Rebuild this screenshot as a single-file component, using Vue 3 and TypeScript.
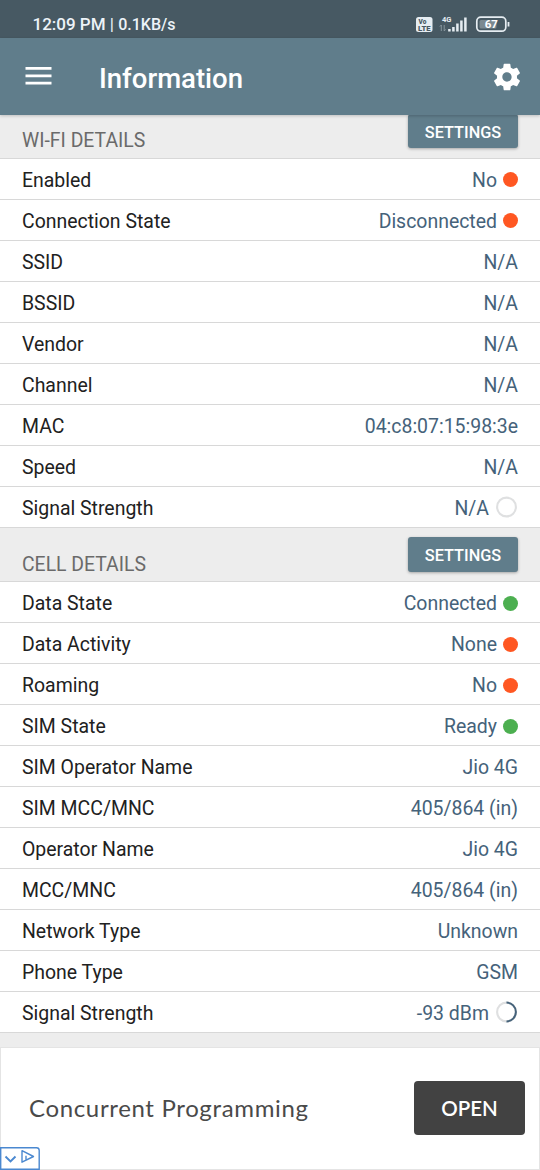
<script setup lang="ts">
type Indicator = 'red' | 'green' | 'ring' | 'progress'

interface Row {
  label: string
  value: string
  mark?: Indicator
}

interface Section {
  title: string
  rows: Row[]
}

const sections: Section[] = [
  {
    title: 'WI-FI DETAILS',
    rows: [
      { label: 'Enabled', value: 'No', mark: 'red' },
      { label: 'Connection State', value: 'Disconnected', mark: 'red' },
      { label: 'SSID', value: 'N/A' },
      { label: 'BSSID', value: 'N/A' },
      { label: 'Vendor', value: 'N/A' },
      { label: 'Channel', value: 'N/A' },
      { label: 'MAC', value: '04:c8:07:15:98:3e' },
      { label: 'Speed', value: 'N/A' },
      { label: 'Signal Strength', value: 'N/A', mark: 'ring' },
    ],
  },
  {
    title: 'CELL DETAILS',
    rows: [
      { label: 'Data State', value: 'Connected', mark: 'green' },
      { label: 'Data Activity', value: 'None', mark: 'red' },
      { label: 'Roaming', value: 'No', mark: 'red' },
      { label: 'SIM State', value: 'Ready', mark: 'green' },
      { label: 'SIM Operator Name', value: 'Jio 4G' },
      { label: 'SIM MCC/MNC', value: '405/864 (in)' },
      { label: 'Operator Name', value: 'Jio 4G' },
      { label: 'MCC/MNC', value: '405/864 (in)' },
      { label: 'Network Type', value: 'Unknown' },
      { label: 'Phone Type', value: 'GSM' },
      { label: 'Signal Strength', value: '-93 dBm', mark: 'progress' },
    ],
  },
]
</script>

<template>
  <div class="screen">
    <div class="status">
      <span class="clock">12:09 PM <i class="bar">|</i> <span class="speed">0.1KB/s</span></span>
      <svg class="status-icons" width="98" height="20" viewBox="0 0 98 20">
        <rect x="2" y="3" width="16.5" height="15" rx="2.5" fill="#e6edf2" />
        <text x="4.500" y="9.600" class="volte">Vo</text>
        <text x="4" y="16.800" class="volte" textLength="12.500" lengthAdjust="spacingAndGlyphs">LTE</text>
        <text x="28" y="8" class="net">4G</text>
        <path d="M27.300 17v-6M25.900 12.600l1.400-1.600M30.200 11v6M31.600 15.400l-1.400 1.600" stroke="#8c9ba4" stroke-width=".9" fill="none" />
        <path d="M34 17.500v-2.500M38 17.500v-4.500M42 17.500v-8M46 17.500v-11M50 17.500v-14" transform="translate(1.400 0)" stroke="#e6edf2" stroke-width="2.500" fill="none" />
        <rect x="62.800" y="3.200" width="29" height="14" rx="4" fill="none" stroke="#e6edf2" stroke-width="1.700" />
        <rect x="65.500" y="6" width="17" height="8.500" rx="1.500" fill="#7b8990" />
        <text x="77.300" y="14.200" class="battery" text-anchor="middle">67</text>
        <path d="M94.500 8v4.500" stroke="#e6edf2" stroke-width="1.800" />
      </svg>
    </div>

    <header class="appbar">
      <svg class="menu" width="28" height="20" viewBox="0 0 28 20">
        <path d="M.5 2.300h26M.5 9.800h26M.5 17.200h26" stroke="#fff" stroke-width="2.700" />
      </svg>
      <h1>Information</h1>
      <svg class="gear" width="32" height="32" viewBox="0 0 24 24">
        <path fill="#fff" d="M19.430 12.980c.04-.32.07-.64.07-.98s-.03-.66-.07-.98l2.110-1.650c.19-.15.24-.42.12-.64l-2-3.460c-.12-.22-.39-.3-.61-.22l-2.490 1c-.52-.4-1.080-.73-1.690-.98l-.38-2.650C14.460 2.180 14.250 2 14 2h-4c-.25 0-.46.18-.49.42l-.38 2.650c-.61.25-1.170.59-1.690.98l-2.490-1c-.23-.09-.49 0-.61.22l-2 3.460c-.13.22-.07.49.12.64l2.110 1.650c-.04.32-.07.65-.07.98s.03.66.07.98l-2.110 1.650c-.19.15-.24.42-.12.64l2 3.460c.12.22.39.3.61.22l2.490-1c.52.4 1.080.73 1.690.98l.38 2.650c.03.24.24.42.49.42h4c.25 0 .46-.18.49-.42l.38-2.650c.61-.25 1.170-.59 1.690-.98l2.490 1c.23.09.49 0 .61-.22l2-3.460c.12-.22.07-.49-.12-.64l-2.110-1.650zM12 15.500c-1.930 0-3.500-1.570-3.500-3.500s1.570-3.500 3.500-3.500 3.500 1.570 3.500 3.500-1.570 3.500-3.500 3.500z" />
      </svg>
    </header>

    <main>
      <section v-for="section in sections" :key="section.title" class="section">
        <div class="section-head">
          <h2>{{ section.title }}</h2>
          <button class="settings">SETTINGS</button>
        </div>
        <div v-for="row in section.rows" :key="row.label" class="row">
          <span class="label">{{ row.label }}</span>
          <span class="value">{{ row.value }}</span>
          <span v-if="row.mark === 'red' || row.mark === 'green'" class="dot" :class="row.mark"></span>
          <svg v-else-if="row.mark" class="ring" width="22" height="22" viewBox="0 0 22 22">
            <circle cx="10.500" cy="11" r="9.400" fill="none" stroke="#dfe0e1" stroke-width="2.100" />
            <path v-if="row.mark === 'progress'" d="M10.500 1.600a9.400 9.400 0 0 1 0 18.800" fill="none" stroke="#45627a" stroke-width="2" />
          </svg>
        </div>
      </section>
    </main>

    <aside class="ad">
      <span class="ad-title">Concurrent Programming</span>
      <button class="open">OPEN</button>
      <div class="ad-badge">
        <svg width="40" height="23" viewBox="0 0 40 23">
          <path d="M-1 .8H36.500a2.700 2.700 0 0 1 2.700 2.700V22.300H.7V.8" fill="#fff" stroke="#4a88d0" stroke-width="1.400" />
          <path d="M5.500 9.500l5 5 5-5" fill="none" stroke="#4a88d0" stroke-width="1.900" />
          <path d="M22 4v11.500l11.500-5.700zM26 9v4.500" transform="translate(0 -.3)" fill="none" stroke="#4a88d0" stroke-width="1.400" stroke-linejoin="round" />
        </svg>
      </div>
    </aside>
  </div>
</template>

<style>
body {
  margin: 0;
}
</style>

<style scoped>
.screen {
  width: 540px;
  height: 1170px;
  overflow: hidden;
  display: flex;
  flex-direction: column;
  background: #ededed;
  font-family: Roboto, "Liberation Sans", sans-serif;
}

.status {
  height: 38px;
  flex: none;
  box-sizing: border-box;
  padding: 10px 28px 0 32.5px;
  display: flex;
  justify-content: space-between;
  background: #475963;
}

.clock {
  color: #edf3f8;
  font-size: 17px;
  line-height: 29px;
  font-weight: 500;
  white-space: nowrap;
}

.bar {
  font-style: normal;
  font-weight: 400;
}

.speed {
  font-size: 16px;
}

.status-icons {
  margin-top: 4px;
}

.volte {
  font: 900 6.500px/1 Roboto, sans-serif;
  fill: #475963;
}

.net {
  font: 700 7.500px Roboto, sans-serif;
  fill: #e6edf2;
}

.battery {
  font: 700 11.500px Roboto, sans-serif;
  fill: #fff;
}

.appbar {
  position: relative;
  z-index: 1;
  height: 77px;
  flex: none;
  box-sizing: border-box;
  padding: 0 17px 1px 25px;
  display: flex;
  align-items: center;
  background: #607d8b;
  box-shadow: 0 1px 3px rgba(0, 0, 0, 0.2);
}

.menu {
  margin-right: 46px;
}

.gear {
  margin-top: 1px;
}

h1 {
  margin: 6px auto 0 0;
  color: #fff;
  font-size: 27.5px;
  line-height: 36px;
  font-weight: 500;
}

.section-head {
  height: 54px;
  box-sizing: border-box;
  padding: 9px 22px 0;
  display: flex;
  justify-content: space-between;
  align-items: flex-start;
  border-bottom: 1px solid #d8d8d8;
}

.section:first-child .section-head {
  margin-top: -10px;
}

h2 {
  margin: 15px 0 0;
  color: #6a6a6a;
  font-size: 19.4px;
  line-height: 26px;
  font-weight: 400;
}

.section:first-child h2 {
  margin-top: 14px;
}

.settings {
  width: 110px;
  height: 35px;
  padding: 1px 0 0;
  border: 0;
  border-radius: 3px;
  background: #607d8b;
  box-shadow: 0 1px 3px rgba(0, 0, 0, 0.3);
  color: #fff;
  font: 500 16.3px Roboto, sans-serif;
}

.section:first-child .settings {
  height: 34px;
  padding-top: 2px;
}

.row {
  height: 41px;
  box-sizing: border-box;
  padding: 1px 22px 0;
  display: flex;
  align-items: center;
  background: #fff;
  border-bottom: 1px solid #d8d8d8;
  font-size: 19.45px;
  line-height: 26px;
}

.label,
.value {
  padding-top: 2px;
}

.label {
  margin-right: auto;
  color: #212121;
}

.value {
  color: #45627a;
}

.dot {
  width: 15px;
  height: 15px;
  margin-left: 6px;
  border-radius: 50%;
}

.section:last-child .dot {
  margin-top: 1px;
}

.red {
  background: #ff5722;
}

.green {
  background: #4caf50;
}

.ring {
  margin: -2px 0 0 7px;
}

.section:last-child .ring {
  margin-top: -1px;
}

.ad {
  position: relative;
  height: 123px;
  margin-top: auto;
  box-sizing: border-box;
  padding: 0 14px 1px 28px;
  display: flex;
  align-items: center;
  justify-content: space-between;
  background: #fff;
  border: 1px solid #e4e4e4;
}

.ad-title {
  margin-top: -2px;
  color: #4a4a4a;
  font: 400 24px Lato, sans-serif;
  letter-spacing: 0.65px;
}

.open {
  width: 111px;
  height: 54px;
  padding: 0 0 1px;
  border: 0;
  border-radius: 4px;
  background: #424242;
  color: #fff;
  font: 600 20.5px Lato, sans-serif;
}

.ad-badge {
  position: absolute;
  left: -1px;
  bottom: -1px;
  height: 23px;
}
</style>
